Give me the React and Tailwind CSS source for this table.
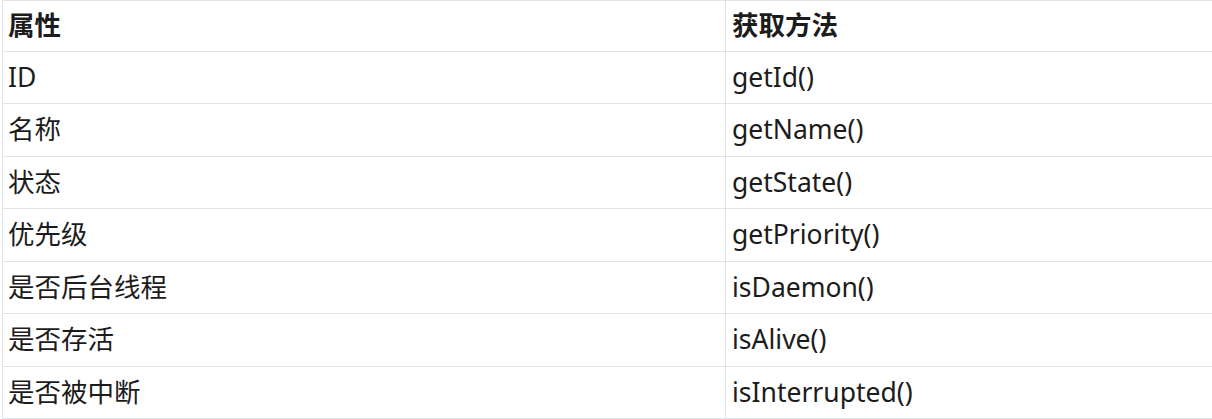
const rows = [
  { name: "ID", method: "getId()", h: "h-[52px]" },
  { name: "名称", method: "getName()", h: "h-[53px]" },
  { name: "状态", method: "getState()", h: "h-[52px]" },
  { name: "优先级", method: "getPriority()", h: "h-[53px]" },
  { name: "是否后台线程", method: "isDaemon()", h: "h-[52px]" },
  { name: "是否存活", method: "isAlive()", h: "h-[53px]" },
  { name: "是否被中断", method: "isInterrupted()", h: "h-[52px]" },
];

export default function App() {
  return (
    <div
      className="bg-white min-h-screen pl-[2px] text-[26.5px] text-[#1c1c1c] overflow-hidden"
      style={{ fontFamily: '"Noto Sans", "Noto Sans CJK SC", sans-serif' }}
    >
      {/* HEADER */}
      <div className="flex h-[52px] border-t border-b border-[#e1e4e8] font-bold">
        <div className="w-[723px] border-l border-[#e1e4e8] pl-[5px] flex items-center">属性</div>
        <div className="flex-1 border-l border-[#e1e4e8] pl-[6px] flex items-center">获取方法</div>
      </div>

      {/* ROWS */}
      {rows.map((r, i) => (
        <div key={i} className={`flex border-b border-[#e1e4e8] ${r.h}`}>
          <div className="w-[723px] border-l border-[#e1e4e8] pl-[5px] flex items-center">{r.name}</div>
          <div className="flex-1 border-l border-[#e1e4e8] pl-[6px] flex items-center">{r.method}</div>
        </div>
      ))}
    </div>
  );
}
